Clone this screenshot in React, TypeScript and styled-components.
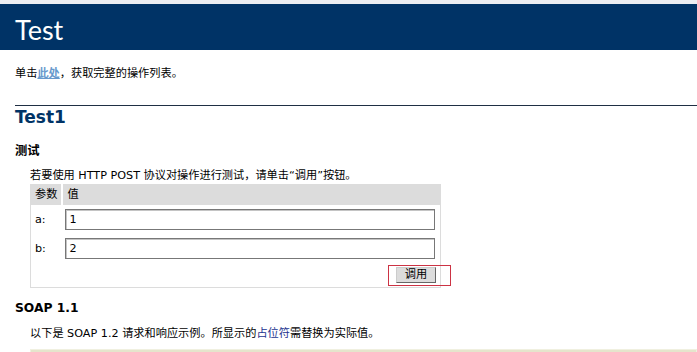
import styled, { createGlobalStyle } from "styled-components";

const GlobalStyle = createGlobalStyle`
  body {
    margin: 0;
    background: #ffffff;
    color: #000000;
    font-family: "DejaVu Sans", "Noto Sans CJK SC", sans-serif;
  }
`;

const TopStrip = styled.div`
  height: 4px;
  background: #eceef2;
`;

const Heading = styled.div`
  height: 46px;
  box-sizing: border-box;
  background: #003366;
  color: #ffffff;
  font-family: Lato, "Noto Sans CJK SC", sans-serif;
  font-size: 27px;
  line-height: 36px;
  padding: 8px 0 0 15px;
`;

const Content = styled.div`
  padding-left: 30px;
`;

const Intro = styled.p`
  margin: 16px 0 0 -15px;
  font-size: 11.2px;
  line-height: 16px;
`;

const Link = styled.a`
  color: #6699cc;
  font-weight: bold;
  text-decoration: underline;
`;

const OpTitle = styled.h2`
  margin: 23px 0 0 -15px;
  padding-bottom: 3px;
  border-top: 1px solid #1f2f44;
  color: #003366;
  font-size: 17px;
  line-height: 22px;
  font-weight: bold;
`;

const SubTitle = styled.h3`
  margin: 12px 0 0 -15px;
  font-size: 12.3px;
  line-height: 17px;
  font-weight: bold;
`;

const Text = styled.p<{ $gap?: number }>`
  margin: ${(p) => p.$gap ?? 8}px 0 0 0;
  font-size: 11.2px;
  line-height: 16px;
`;

const Placeholder = styled.span`
  color: #22338f;
`;

const FormTable = styled.table`
  border-collapse: collapse;
  border: 1px solid #dcdcdc;
  width: 411px;
  font-size: 11.2px;
`;

const HeadCell = styled.td<{ $divider?: boolean }>`
  background: #dcdcdc;
  padding: 4px;
  line-height: 12px;
  border-right: ${(p) => (p.$divider ? "2px solid #ffffff" : "none")};
  white-space: nowrap;
`;

const Cell = styled.td`
  padding: 4px;
  vertical-align: middle;
  line-height: 12px;
`;

const Input = styled.input`
  display: block;
  box-sizing: border-box;
  width: 370px;
  height: 21px;
  margin-left: -1px;
  border: 1px solid #777777;
  box-shadow: inset 1px 1px 0 #c4c4c4;
  padding: 0 3px;
  font-family: "DejaVu Sans", sans-serif;
  font-size: 11.2px;
  outline: none;
`;

const ButtonRow = styled.div`
  display: flex;
  justify-content: flex-end;
`;

const Marked = styled.span`
  position: relative;
  display: inline-flex;
  &::after {
    content: "";
    position: absolute;
    top: -2px;
    left: -8px;
    right: -15px;
    bottom: -3px;
    border: 1px solid #cc3344;
    pointer-events: none;
  }
`;

const Button = styled.button`
  box-sizing: border-box;
  width: 40px;
  height: 16px;
  padding: 0;
  background: #dcdcdc;
  border-top: 1px solid #cccccc;
  border-left: 1px solid #cccccc;
  border-bottom: 1px solid #666666;
  border-right: 1px solid #666666;
  font-family: "DejaVu Sans", "Noto Sans CJK SC", sans-serif;
  font-size: 11.2px;
  line-height: 14px;
  color: #000000;
`;

const Sample = styled.pre`
  margin: 7px 0 0 0;
  height: 40px;
  background: #e5e5cc;
  border: 1px solid #f0f0e0;
`;

export default function App() {
  return (
    <>
      <GlobalStyle />
      <TopStrip />
      <Heading>Test</Heading>
      <Content>
        <Intro>
          单击<Link href="#">此处</Link>，获取完整的操作列表。
        </Intro>

        <OpTitle>Test1</OpTitle>

        <SubTitle>测试</SubTitle>
        <Text>若要使用 HTTP POST 协议对操作进行测试，请单击“调用”按钮。</Text>

        <FormTable>
          <tbody>
            <tr>
              <HeadCell $divider>参数</HeadCell>
              <HeadCell style={{ width: "100%" }}>值</HeadCell>
            </tr>
            <tr>
              <Cell>a:</Cell>
              <Cell>
                <Input type="text" defaultValue="1" />
              </Cell>
            </tr>
            <tr>
              <Cell>b:</Cell>
              <Cell>
                <Input type="text" defaultValue="2" />
              </Cell>
            </tr>
            <tr>
              <Cell />
              <Cell>
                <ButtonRow>
                  <Marked>
                    <Button type="button">调用</Button>
                  </Marked>
                </ButtonRow>
              </Cell>
            </tr>
          </tbody>
        </FormTable>

        <SubTitle>SOAP 1.1</SubTitle>
        <Text $gap={9}>
          以下是 SOAP 1.2 请求和响应示例。所显示的<Placeholder>占位符</Placeholder>需替换为实际值。
        </Text>
        <Sample />
      </Content>
    </>
  );
}
